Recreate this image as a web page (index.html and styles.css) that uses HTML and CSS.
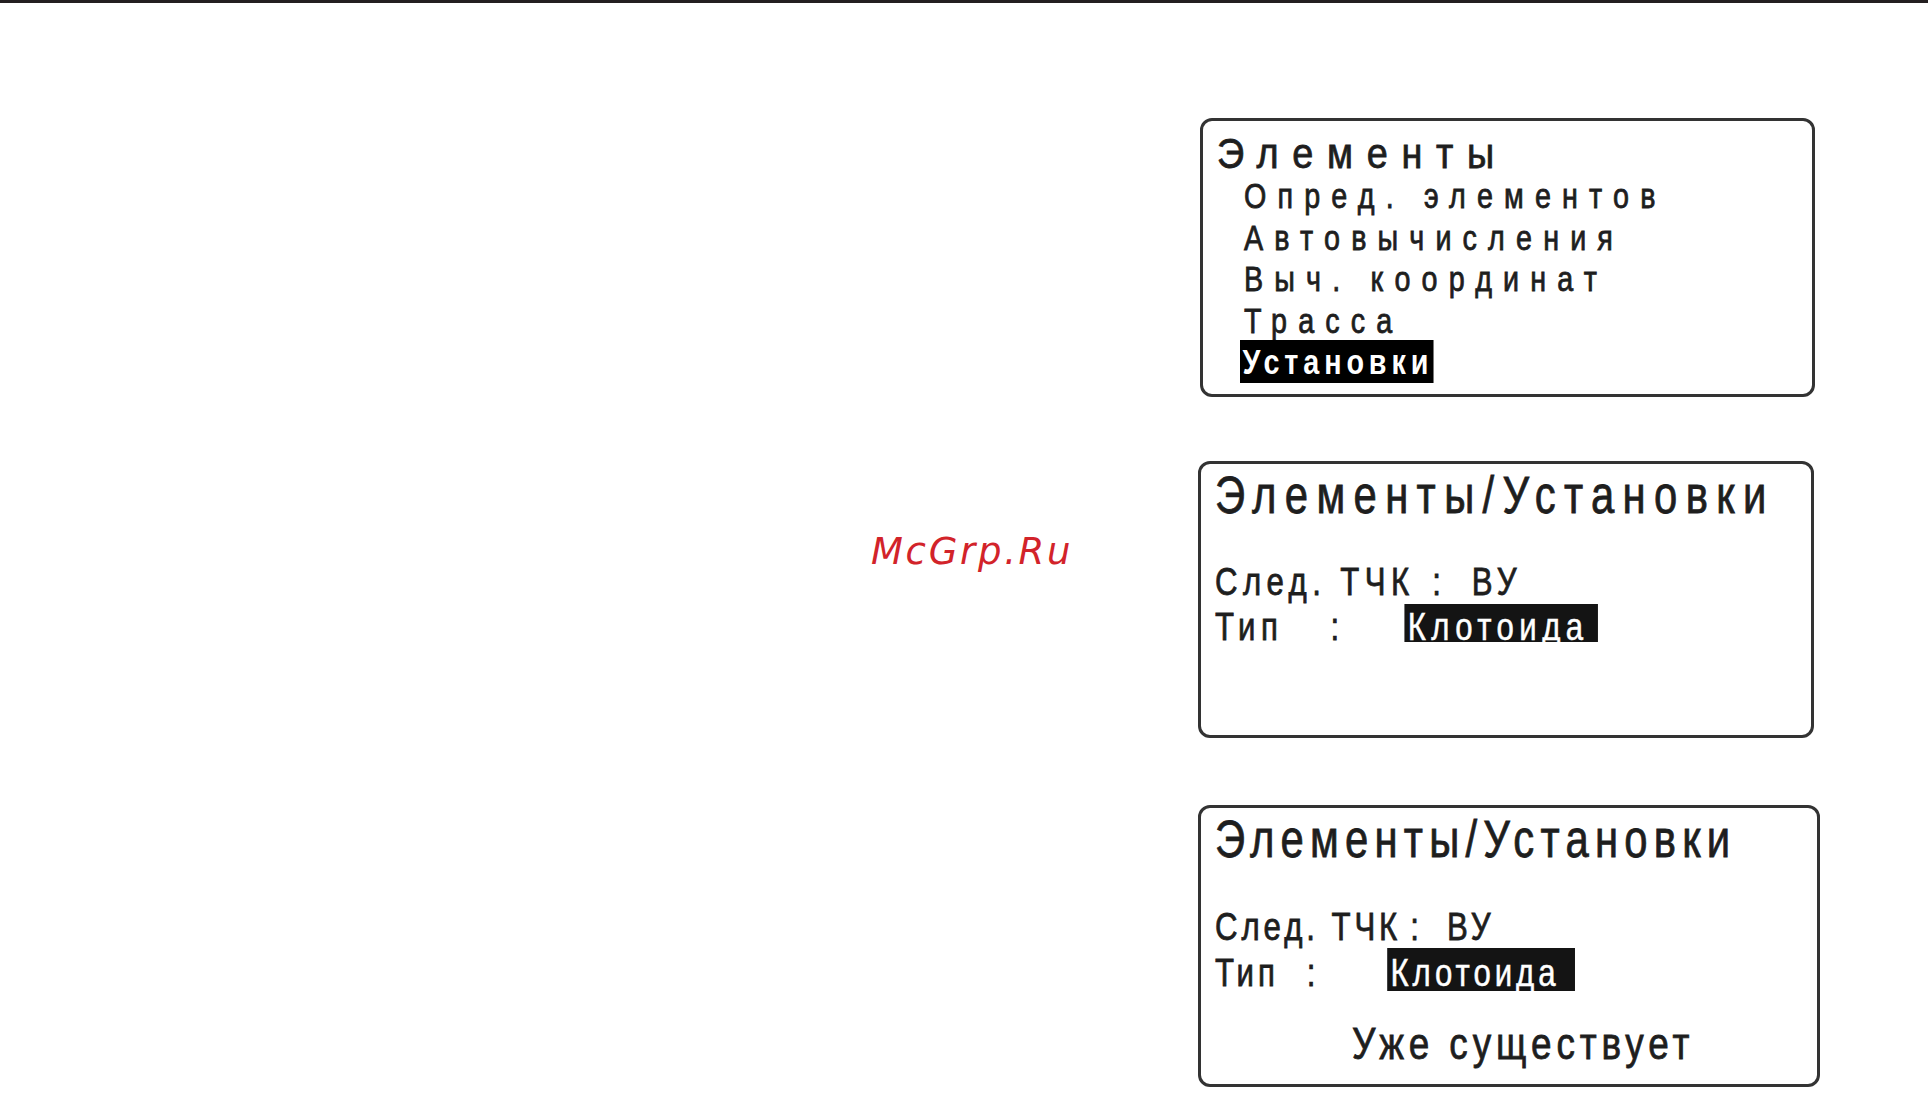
FILE: index.html
```html
<!DOCTYPE html>
<html lang="ru">
<head>
<meta charset="utf-8">
<title>Элементы / Установки</title>
<link rel="stylesheet" href="styles.css">
</head>
<body>
<div class="topline"></div>
<div class="watermark">McGrp.Ru</div>
<div class="column">
  <div class="screen screen-menu">
    <div class="narrow menu-title">Элементы</div>
    <div class="narrow menu-item">Опред. элементов</div>
    <div class="narrow menu-item">Автовычисления</div>
    <div class="narrow menu-item">Выч. координат</div>
    <div class="narrow menu-item">Трасса</div>
    <div class="narrow menu-item menu-last"><span class="menu-selected">Установки</span></div>
  </div>

  <div class="screen screen-set">
    <div class="narrow set-title t1">Элементы/Установки</div>
    <div class="narrow row row-first rs1">
      <span class="lbl l1">След. ТЧК</span><span class="colon c1">:</span><span class="val">ВУ</span>
    </div>
    <div class="narrow row rs1">
      <span class="lbl l2">Тип</span><span class="colon c2">:</span><span class="hl h1">Клотоида</span>
    </div>
  </div>

  <div class="screen screen-set2">
    <div class="narrow set-title t2">Элементы/Установки</div>
    <div class="narrow row row-first3 rs2">
      <span class="lbl l3">След. ТЧК</span><span class="colon c3">:</span><span class="val">ВУ</span>
    </div>
    <div class="narrow row rs2">
      <span class="lbl l4">Тип</span><span class="colon c4">:</span><span class="hl h2">Клотоида</span>
    </div>
    <div class="narrow message">Уже существует</div>
  </div>
</div>
</body>
</html>
```
FILE: styles.css
```css
html, body {
  margin: 0;
  padding: 0;
  background: #ffffff;
}
body {
  width: 1928px;
  height: 1101px;
  overflow: hidden;
  position: relative;
  font-family: "Liberation Sans", Arial, sans-serif;
  color: #1e1e1e;
}
.topline {
  height: 3px;
  background: #231f20;
}
.watermark {
  position: absolute;
  left: 871px;
  top: 533px;
  font-family: "DejaVu Sans", sans-serif;
  font-style: italic;
  font-size: 37px;
  line-height: 1;
  letter-spacing: 2.7px;
  color: #d2232a;
}
.column {
  display: flex;
  flex-direction: column;
  align-items: flex-start;
  padding: 115px 0 0 1198px;
}
.screen {
  box-sizing: border-box;
  border: 3px solid #333333;
  border-radius: 12px;
  background: #fff;
}
/* condensed LCD-style lettering */
.narrow {
  transform: scaleX(0.82);
  transform-origin: 0 50%;
  white-space: nowrap;
  -webkit-text-stroke: 0.8px currentColor;
}
.screen-menu {
  margin-left: 2px;
  width: 615px;
  height: 279px;
  padding: 12px 0 0 14px;
}
.menu-title {
  transform: scaleX(0.9);
  font-size: 42px;
  line-height: 42px;
  letter-spacing: 15.2px;
}
.menu-item {
  margin-left: 27px;
  font-size: 35px;
  line-height: 41.5px;
  letter-spacing: 13.6px;
}
.menu-last {
  margin-left: 23px;
  margin-top: -1px;
}
.menu-selected {
  display: inline-block;
  line-height: 43px;
  padding: 0 0 0 3px;
  background: #000;
  color: #fff;
  font-weight: bold;
  letter-spacing: 6px;
  -webkit-text-stroke: 0;
}
.screen-set {
  margin-top: 64px;
  width: 616px;
  height: 277px;
  padding: 6px 0 0 14px;
}
.screen-set2 {
  margin-top: 67px;
  width: 622px;
  height: 282px;
  padding: 6px 0 0 14px;
}
.set-title {
  font-size: 51px;
  line-height: 52px;
}
.t1 { letter-spacing: 10.2px; }
.t2 { letter-spacing: 7.6px; }
.row {
  font-size: 38px;
  line-height: 45px;
}
.rs1 { letter-spacing: 6.6px; }
.rs2 { letter-spacing: 4.8px; }
.row-first {
  margin-top: 38px;
}
.row-first3 {
  margin-top: 38.5px;
}
.lbl, .colon, .val, .hl { display: inline-block; }
.l1 { width: 265px; }
.c1 { width: 48px; }
.l2 { width: 141px; }
.c2 { width: 90px; }
.l3 { width: 238px; }
.c3 { width: 45px; }
.l4 { width: 112px; }
.c4 { width: 98px; }
.hl {
  box-sizing: border-box;
  background: #141414;
  color: #fff;
  padding-left: 4px;
  -webkit-text-stroke: 0.5px #fff;
}
.h1 {
  width: 236px;
  letter-spacing: 6.6px;
  line-height: 30px;
  padding-top: 8px;
  margin-top: -1px;
}
.h2 {
  width: 229px;
  letter-spacing: 4.8px;
  line-height: 36px;
  padding-top: 7px;
  margin-top: -2px;
}
.message {
  margin-top: 23px;
  margin-left: 137px;
  font-size: 45px;
  line-height: 50px;
  letter-spacing: 6px;
}
```
